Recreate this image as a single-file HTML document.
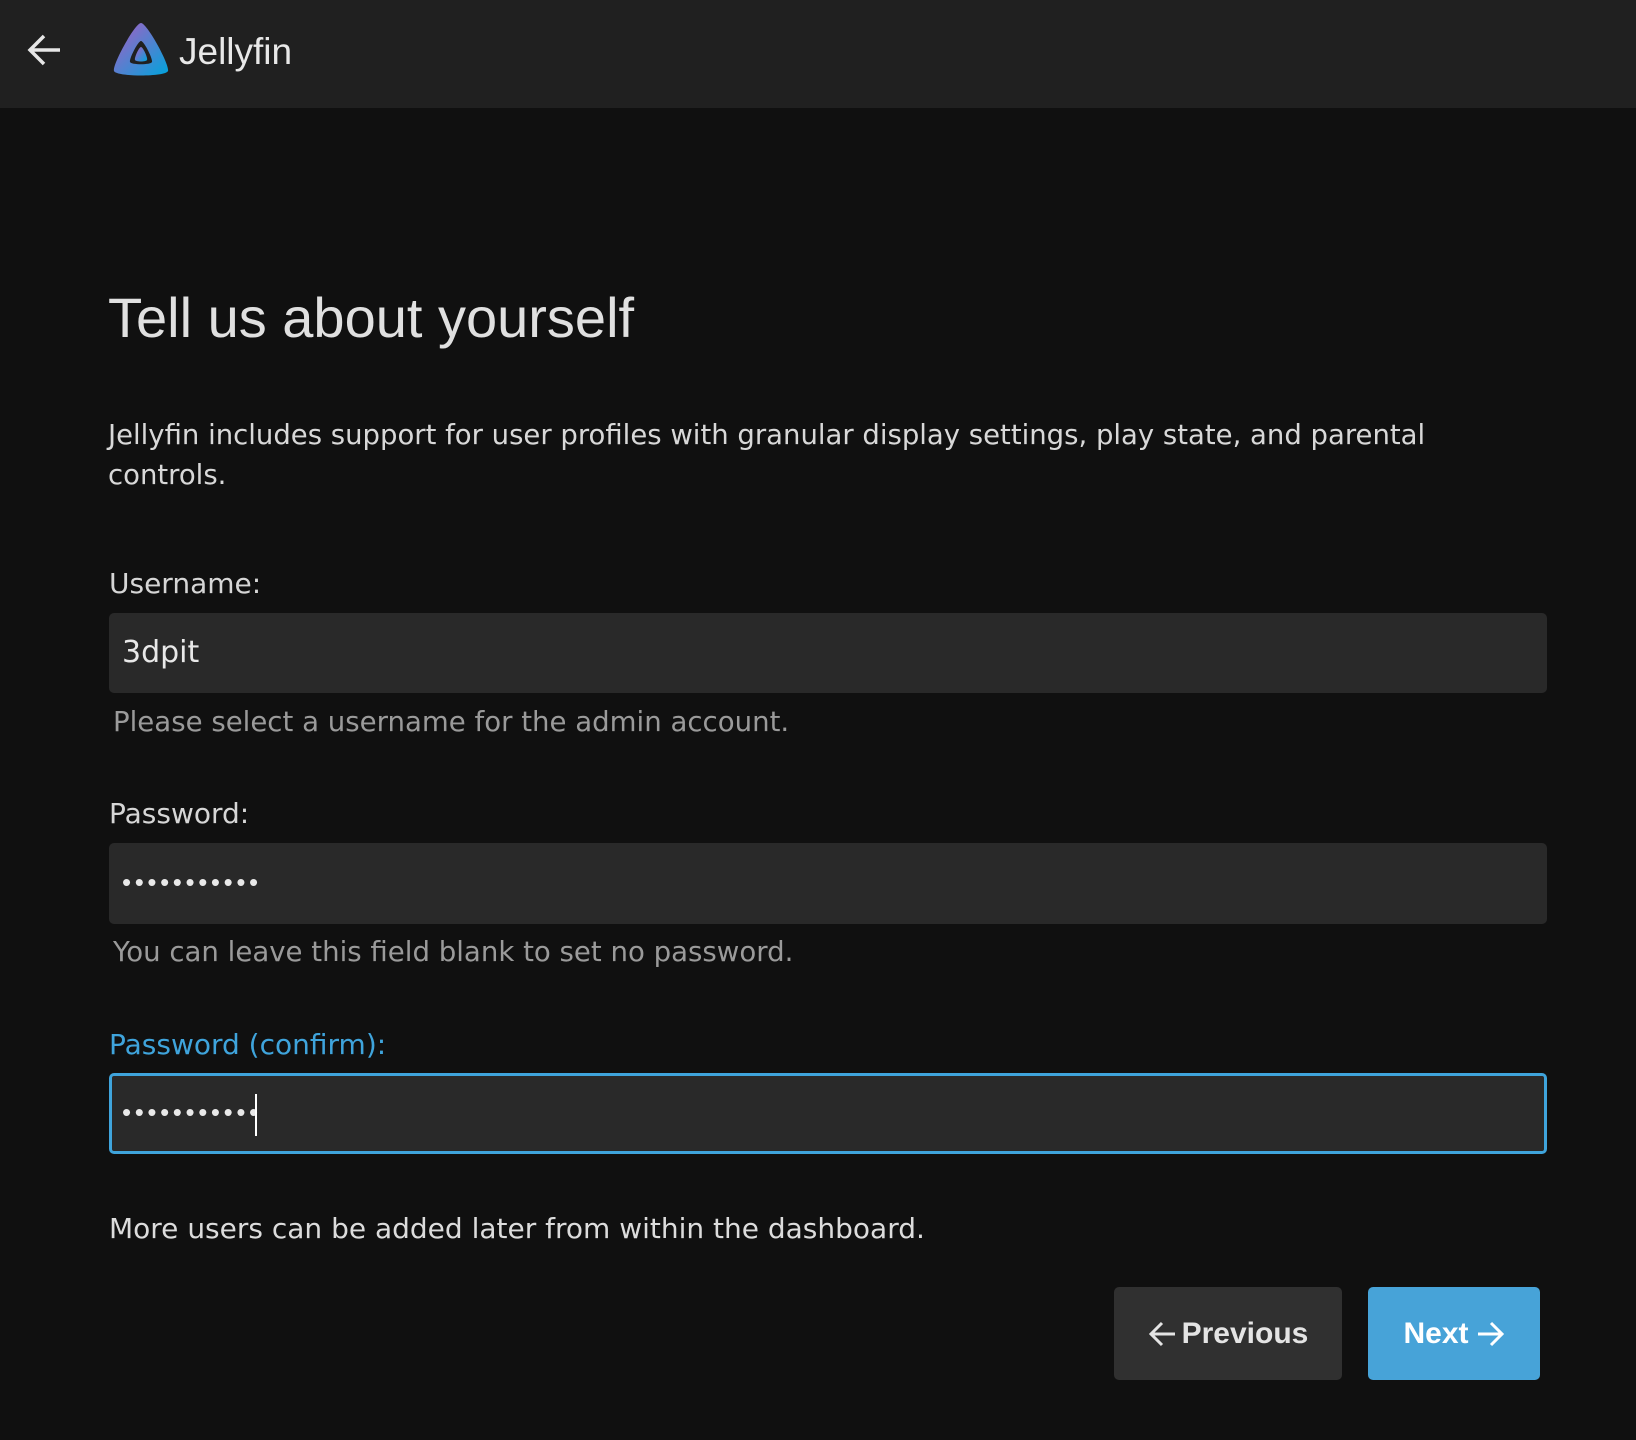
<!DOCTYPE html>
<html><head><meta charset="utf-8"><style>
*{box-sizing:border-box;margin:0;padding:0}
body{width:1636px;height:1440px;background:#101010;font-family:"DejaVu Sans","Liberation Sans",sans-serif;color:#e0e0e0;position:relative;overflow:hidden}
.hdr{position:absolute;left:0;top:0;width:1636px;height:108px;background:#202020}
.abs{position:absolute;white-space:nowrap}
.lbl{font-size:28px;color:#d6d6d6}
.help{font-size:27.6px;color:#9a9a9a}
.inp{position:absolute;left:109px;width:1438px;background:#292929;border-radius:5px}
.dots{position:absolute;left:13px;top:0;font-size:26px;letter-spacing:3.6px;color:#e8e8e8;font-family:"Liberation Sans",sans-serif}
.btn{position:absolute;top:1287px;height:93px;border-radius:5px;font-weight:bold;font-size:30px;display:flex;align-items:center;justify-content:center;font-family:"Liberation Sans",sans-serif}
</style></head><body>
<div class="hdr">
<svg class="abs" style="left:26px;top:32px" width="38" height="36" viewBox="0 0 38 36"><path d="M34 18H4M18 4L4 18l14 14" stroke="#e6e6e6" stroke-width="3.5" fill="none"/></svg>
<svg class="abs" style="left:110px;top:21px" width="62" height="60" viewBox="0 0 62 60">
<defs><linearGradient id="g" x1="0" y1="0" x2="1" y2="1"><stop offset="0" stop-color="#aa5cc3"/><stop offset="1" stop-color="#00a4dc"/></linearGradient></defs>
<path fill="url(#g)" fill-rule="evenodd" d="M31 2C25 2 2 44 4 50c2 6 52 6 54 0C60 44 37 2 31 2zM31 20c-3 0-12 18-11 21 1 3 21 3 22 0 1-3-8-21-11-21z"/>
<path fill="url(#g)" d="M31 26c-2 0-7 11-6 13 1 2 11 2 12 0 1-2-4-13-6-13z"/></svg>
<div class="abs" style="left:179px;top:31px;font-size:37px;color:#e8e8e8;font-family:'Liberation Sans',sans-serif">Jellyfin</div>
</div>
<div class="abs" style="left:108px;top:285px;font-size:56px;color:#e0e0e0;font-family:'Liberation Sans',sans-serif">Tell us about yourself</div>
<div class="abs" style="left:108px;top:415px;font-size:27.5px;line-height:40px;color:#d8d8d8">Jellyfin includes support for user profiles with granular display settings, play state, and parental<br>controls.</div>
<div class="abs lbl" style="left:109px;top:567px">Username:</div>
<div class="inp" style="top:613px;height:80px"><div class="abs" style="left:13px;top:22px;font-size:30px;color:#e8e8e8">3dpit</div></div>
<div class="abs help" style="left:113px;top:705px">Please select a username for the admin account.</div>
<div class="abs lbl" style="left:109px;top:797px">Password:</div>
<div class="inp" style="top:843px;height:81px"><div class="dots" style="top:24px">•••••••••••</div></div>
<div class="abs help" style="left:113px;top:935px">You can leave this field blank to set no password.</div>
<div class="abs lbl" style="left:109px;top:1028px;color:#3fa4dc">Password (confirm):</div>
<div class="inp" style="top:1073px;height:81px;border:3px solid #3fa4dc"><div class="dots" style="left:10px;top:21px">•••••••••••</div><div class="abs" style="left:143px;top:18px;width:2px;height:42px;background:#fff"></div></div>
<div class="abs" style="left:109px;top:1212px;font-size:28px;color:#dcdcdc">More users can be added later from within the dashboard.</div>
<div class="btn" style="left:1114px;width:228px;background:#303030;color:#e4e4e4"><svg width="30" height="28" viewBox="0 0 30 28" style="margin-right:4px"><path d="M27 14H4M14 3L3 14l11 11" stroke="#e4e4e4" stroke-width="3" fill="none"/></svg>Previous</div>
<div class="btn" style="left:1368px;width:172px;background:#47a3d8;color:#fff">Next<svg width="30" height="28" viewBox="0 0 30 28" style="margin-left:6px"><path d="M3 14h23M16 3l11 11-11 11" stroke="#fff" stroke-width="3" fill="none"/></svg></div>
</body></html>
